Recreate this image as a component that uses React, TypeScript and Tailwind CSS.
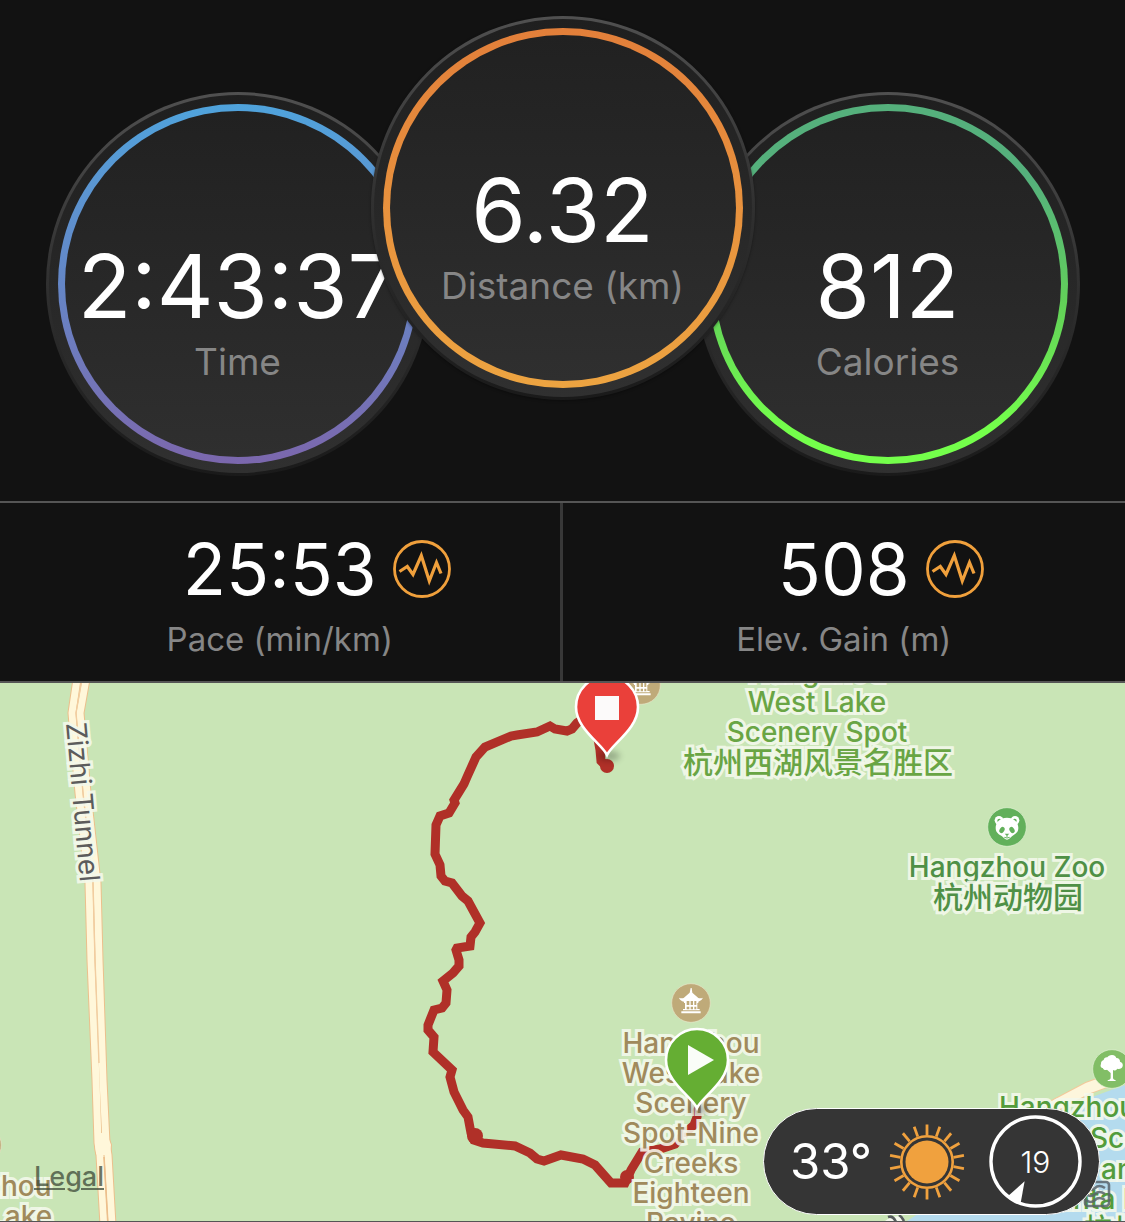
import React from "react";

const FONT = "font-['Inter','Noto_Sans_CJK_SC',sans-serif]";

type DialProps = {
  value: string;
  label: string;
  ring: string;
  className?: string;
};

function Dial({ value, label, ring, className = "" }: DialProps) {
  return (
    <div
      className={`size-96 shrink-0 rounded-full bg-linear-to-b from-[#505050] via-[#303030] to-[#1a1a1a] p-[3px] ${className}`}
    >
      <div className="size-full rounded-full bg-linear-to-b from-[#1f1f1f] to-[#303030] p-[9px]">
        <div className={`size-full rounded-full bg-linear-to-b p-[7px] ${ring}`}>
          <div className="grid size-full grid-rows-[1fr_auto_1fr] justify-center rounded-full bg-linear-to-b from-[#212121] to-[#2f2f2f] text-center whitespace-nowrap">
            <div />
            <div className="pt-1 text-[88px] leading-[88px] text-white">{value}</div>
            <div className="pt-3 text-[37px] leading-10 text-[#868686]">{label}</div>
          </div>
        </div>
      </div>
    </div>
  );
}

function TrendIcon() {
  return (
    <svg viewBox="0 0 58 58" className="size-[58px]" fill="none" stroke="#f0a03c" aria-hidden="true">
      <circle cx="29" cy="29" r="27.5" strokeWidth="2.8" />
      <path d="M6.5 31.5 14.3 26.5 20 34.5 28.3 15.5 36.3 41 43.5 22.5 48 33.5" strokeWidth="3.2" />
    </svg>
  );
}

function Stat({ value, label }: { value: string; label: string }) {
  return (
    <div className="flex flex-col items-center pt-7.5 pb-5.5">
      <div className="grid w-full grid-cols-[1fr_auto_1fr] items-center gap-4">
        <div />
        <div className="text-[71px] leading-[72px] text-white">{value}</div>
        <button type="button" aria-label={`${label} chart`} className="size-[58px]">
          <TrendIcon />
        </button>
      </div>
      <div className="mt-3.5 text-[33px] leading-10 text-[#868686]">{label}</div>
    </div>
  );
}

const HALO = "[paint-order:stroke_fill] [-webkit-text-stroke:6px_rgba(244,249,236,0.9)] [stroke-linejoin:round]";

function MapLabel({ lines, className }: { lines: string[]; className: string }) {
  return (
    <div className={`absolute text-center text-[28px] leading-[30px] font-medium whitespace-nowrap ${HALO} ${className}`}>
      {lines.map((line) => (
        <div key={line}>{line}</div>
      ))}
    </div>
  );
}

function Pagoda({ x, y }: { x: number; y: number }) {
  return (
    <g transform={`translate(${x - 19} ${y - 19}) scale(0.3333)`}>
      <circle cx="57" cy="57" r="58" fill="#bfaa79" stroke="#e9e6c8" strokeWidth="2" />
      <path
        fill="#fff"
        fillRule="evenodd"
        d="M56 12h3l2 14 18 16q8 2 14-1-4 10-14 12v4h-3v18h7v4H33v-4h6V57h-3v-4Q24 50 21 41q7 3 14 1l18-16ZM44 51v12h8v-12Zm12 0v12h7v-12Zm11 0v12h6v-12ZM44 68v8h8v-8Zm12 0v8h7v-8Zm11 0v8h6v-8ZM28 82h58v6H28Z"
      />
    </g>
  );
}

function Panda({ x, y }: { x: number; y: number }) {
  return (
    <g transform={`translate(${x - 19} ${y - 19}) scale(0.3333)`}>
      <circle cx="57" cy="57" r="58" fill="#62b05b" stroke="#e2f2d4" strokeWidth="2" />
      <circle cx="33" cy="37" r="13" fill="#fff" />
      <circle cx="81" cy="37" r="13" fill="#fff" />
      <circle cx="34" cy="38" r="6" fill="#62b05b" />
      <circle cx="80" cy="38" r="6" fill="#62b05b" />
      <path d="M57 29c21 0 34 14 34 31 0 15-11 19-19 25-6 5-9 10-15 10s-9-5-15-10c-8-6-19-10-19-25 0-17 13-31 34-31Z" fill="#fff" />
      <ellipse cx="42" cy="66" rx="7" ry="10" transform="rotate(32 42 66)" fill="#62b05b" />
      <ellipse cx="72" cy="66" rx="7" ry="10" transform="rotate(-32 72 66)" fill="#62b05b" />
      <path d="M50 77h14l-7 7Z" fill="#62b05b" />
      <path d="M57 82v5M49 88q8 4 16 0" fill="none" stroke="#62b05b" strokeWidth="3" />
    </g>
  );
}

function Tree({ x, y }: { x: number; y: number }) {
  return (
    <g transform={`translate(${x - 19} ${y - 19}) scale(0.3333)`}>
      <circle cx="57" cy="57" r="58" fill="#82be66" stroke="#e2f2d4" strokeWidth="2" />
      <path
        fill="#fff"
        d="M57 15c8 0 12 5 13 9 8 0 12 6 11 11 7 2 10 8 8 14-2 7-10 9-16 7-3 5-9 7-13 4v25q1 4 8 6v2H44v-2q8-2 9-6V69L42 59c-5 3-11 0-13-5-5 0-8-7-5-12-1-7 4-11 8-12 1-6 6-9 11-8 2-4 7-7 14-7Z"
      />
    </g>
  );
}

const LEFT_LANE = "M77-4 72 30 79 110 89 200 91 277 96 397 98 460 100 472 104 542";
const RIGHT_LANE = "M86-4 80 30 87 110 97 200 99 277 103 397 106 460 108 472 112 542";

const ROUTE =
  "M607 84 601 78 600 67 596 45 583 36 577 40 572 46 567 48 555 46 550 43 537 49 517 52 511 53 485 64 476 74 467 94 464 101 454 117 455 120 449 130 440 133 436 142 435 171 440 182 441 193 445 198 452 200 462 213 468 218 480 240 475 249 471 254 470 263 457 265 456 267 459 277 459 283 453 290 443 298 447 307 446 320 442 325 434 327 428 342 428 347 434 354 433 369 452 387 450 394 454 409 463 427 468 434 471 450 474 457 483 460 515 463 530 470 537 476 544 478 561 472 583 476 595 482 611 500 625 500 631 487 642 469 660 466 675 461 685 450 694 442 697 434 697 428";

function MapArt() {
  return (
    <svg width="1125" height="538" viewBox="0 0 1125 538" className="absolute top-0 left-0" aria-hidden="true">
      <path d="M1125 402 1092 414 1060 434 1000 490 935 520 907 538H1125Z" fill="#b4dbee" />
      <path d="M1135 388 1088 405 1050 425" stroke="#f3c99b" strokeWidth="13" fill="none" />
      <path d="M1135 388 1088 405 1050 425" stroke="#fdf6dc" strokeWidth="11" fill="none" />
      <g fill="none" strokeLinejoin="round">
        <path d={LEFT_LANE} stroke="#ecbf8c" strokeWidth="9" />
        <path d={RIGHT_LANE} stroke="#ecbf8c" strokeWidth="9" />
        <path d="M98 452 105 452 109 462 108 470 98 470 97 462Z" stroke="#ecbf8c" strokeWidth="6" />
        <path d={LEFT_LANE} stroke="#fff7da" strokeWidth="7" />
        <path d={RIGHT_LANE} stroke="#fff7da" strokeWidth="7" />
        <path d="M98 452 105 452 109 462 108 470 98 470 97 462Z" fill="#fff7da" stroke="#fff7da" strokeWidth="4" />
        <path d="M82-4 76 30 83 110 93 200 95 277 99 380" stroke="#f1cda0" strokeWidth="1.4" />
        <path d="M104 474 108 542" stroke="#ecbf8c" strokeWidth="1.6" />
      </g>
      <path d={ROUTE} fill="none" stroke="#b03028" strokeWidth="9" strokeLinejoin="miter" strokeLinecap="round" />
      <circle cx="607" cy="83" r="7" fill="#b03028" />
      <circle cx="475" cy="453" r="8" fill="#b03028" />
      <circle cx="627" cy="494" r="7" fill="#b03028" />
      <Pagoda x={641} y={2} />
      <Pagoda x={691} y={320} />
      <Pagoda x={-18} y={462} />
      <Panda x={1007} y={144} />
      <Tree x={1112} y={386} />
    </svg>
  );
}

function Pin({ x, y, fill, children }: { x: number; y: number; fill: string; children: React.ReactNode }) {
  return (
    <g transform={`translate(${x} ${y})`}>
      <ellipse cx="2" cy="49" rx="11" ry="5" fill="#000" opacity="0.25" filter="url(#pin-shadow)" />
      <path
        d="M0 48C-5 37-31 22-31 0A31 31 0 0 1 31 0C31 22 5 37 0 48Z"
        fill={fill}
        stroke="#fff"
        strokeWidth="2.6"
      />
      {children}
    </g>
  );
}

function Pins() {
  return (
    <svg width="1125" height="538" viewBox="0 0 1125 538" className="absolute top-0 left-0" aria-hidden="true">
      <defs>
        <filter id="pin-shadow" x="-50%" y="-100%" width="200%" height="300%">
          <feGaussianBlur stdDeviation="3" />
        </filter>
      </defs>
      <Pin x={607} y={24} fill="#ea403a">
        <rect x="-12" y="-11" width="24" height="24" fill="#fcfafa" />
      </Pin>
      <Pin x={697} y={377} fill="#65ae33">
        <path d="M-9-15 17 0-9 15Z" fill="#fafdf8" />
      </Pin>
    </svg>
  );
}

const RAYS = Array.from({ length: 18 }, (_, i) => i * 20);

function Weather() {
  return (
    <div className="absolute right-[25px] bottom-[6px] flex items-center rounded-full border border-white bg-[#353535] py-1.5 pr-[17px] pl-[26px]">
      <span className="w-20 text-[49px] leading-[56px] whitespace-nowrap text-white">33°</span>
      <svg viewBox="-38 -38 76 76" className="ml-[19px] size-[76px]" aria-label="Sunny">
        <circle r="21.5" fill="#f0a13e" />
        <circle r="25.7" fill="none" stroke="#f0a13e" strokeWidth="2.6" />
        {RAYS.map((angle) => (
          <path key={angle} d="M0-27V-37.5" stroke="#f0a13e" strokeWidth="2.8" transform={`rotate(${angle})`} />
        ))}
      </svg>
      <div className="ml-6 grid size-[93px] place-items-center">
        <svg viewBox="-47 -47 94 94" className="col-start-1 row-start-1 size-full" aria-hidden="true">
          <circle r="45" fill="none" stroke="#fff" strokeWidth="3.4" />
          <path d="M-11 20-28 35-15 42Z" fill="#fff" />
        </svg>
        <span className="col-start-1 row-start-1 text-[30px] leading-8 font-light text-white">19</span>
      </div>
    </div>
  );
}

export default function App() {
  return (
    <main className={`flex min-h-screen flex-col bg-[#121212] ${FONT}`}>
      <section className="flex justify-center overflow-hidden pt-4 pb-[25px]">
        <Dial value="2:43:37" label="Time" ring="from-[#4fa3dc] via-[#6486c6] to-[#7b67ad]" className="mt-[76px] -mr-[59px]" />
        <Dial
          value="6.32"
          label="Distance (km)"
          ring="from-[#e27f3a] to-[#eda441]"
          className="relative z-10 shadow-[0_1px_3px_rgba(0,0,0,0.35)]"
        />
        <Dial value="812" label="Calories" ring="from-[#55b07c] from-20% via-[#62d058] via-55% to-[#74ff4b] to-90%" className="mt-[76px] -ml-[59px]" />
      </section>

      <section className="grid grid-cols-2 divide-x-3 divide-[#383838] border-y-2 border-[#555555]">
        <Stat value="25:53" label="Pace (min/km)" />
        <Stat value="508" label="Elev. Gain (m)" />
      </section>

      <section className="relative min-h-[538px] flex-1 overflow-hidden border-b border-[#555555] bg-[#c9e5b6]" aria-label="Route map">
        <MapArt />
        <div className={`absolute top-[105px] left-[3px] w-40 rotate-85 text-center text-[28px] leading-7 whitespace-nowrap text-[#5c5c5c] ${HALO}`}>
          Zizhi Tunnel
        </div>
        <MapLabel lines={["Hangzhou", "West Lake", "Scenery Spot"]} className="-top-[26px] left-[667px] w-[300px] text-[#69a544]" />
        <div className={`absolute top-[65px] left-[668px] w-[300px] text-center text-[30px] leading-7 font-medium whitespace-nowrap text-[#69a544] ${HALO}`}>
          杭州西湖风景名胜区
        </div>
        <MapLabel lines={["Hangzhou Zoo"]} className="top-[169px] left-[857px] w-[300px] text-[#4f9046]" />
        <div className={`absolute top-[200px] left-[858px] w-[300px] text-center text-[30px] leading-7 font-medium whitespace-nowrap text-[#4f9046] ${HALO}`}>
          杭州动物园
        </div>
        <MapLabel
          lines={["Hangzhou", "West Lake", "Scenery", "Spot-Nine", "Creeks", "Eighteen", "Ravine"]}
          className="top-[345px] left-[591px] w-[200px] text-[#a08a5c]"
        />
        <MapLabel lines={["Hangzhou", "West Lake"]} className="top-[488px] -left-[117px] w-[200px] text-[#a08a5c]" />
        <MapLabel lines={["Hangzhou"]} className="top-[409px] left-[999px] text-[#539c3c]" />
        <MapLabel lines={["Scenic"]} className="top-[440px] left-[1090px] text-[#539c3c]" />
        <MapLabel lines={["and"]} className="top-[471px] left-[1101px] text-[#539c3c]" />
        <MapLabel lines={["Santa Park"]} className="top-[501px] left-[1039px] text-[#539c3c]" />
        <MapLabel lines={["杭州"]} className="top-[531px] left-[1084px] text-[#539c3c]" />
        <Pins />
        <svg width="28" height="28" viewBox="0 0 28 28" className="absolute top-[497px] left-[1083px]" fill="none" stroke="#59646c" strokeWidth="2.6" opacity="0.85" aria-hidden="true">
          <rect x="2" y="2" width="24" height="24" rx="3" />
          <path d="M3 8q5 4 9 0t10 0M3 14q5 4 9 0t10 0M3 20q5 4 9 0t10 0" />
        </svg>
        <svg width="22" height="8" viewBox="0 0 22 8" className="absolute top-[531px] left-[884px]" fill="none" aria-hidden="true">
          <path d="M0 8Q8 0 20 3V8Z" fill="#f4f8ee" />
          <path d="M4 3q5-2 8 5M15 1q3 2 5 6" stroke="#555b5b" strokeWidth="2.6" />
        </svg>
        <a href="#legal" className="absolute top-[480px] left-[34px] text-[27px] leading-7 font-medium text-[#3d4a38]/75 underline decoration-2 underline-offset-2">
          Legal
        </a>
        <Weather />
      </section>
    </main>
  );
}
